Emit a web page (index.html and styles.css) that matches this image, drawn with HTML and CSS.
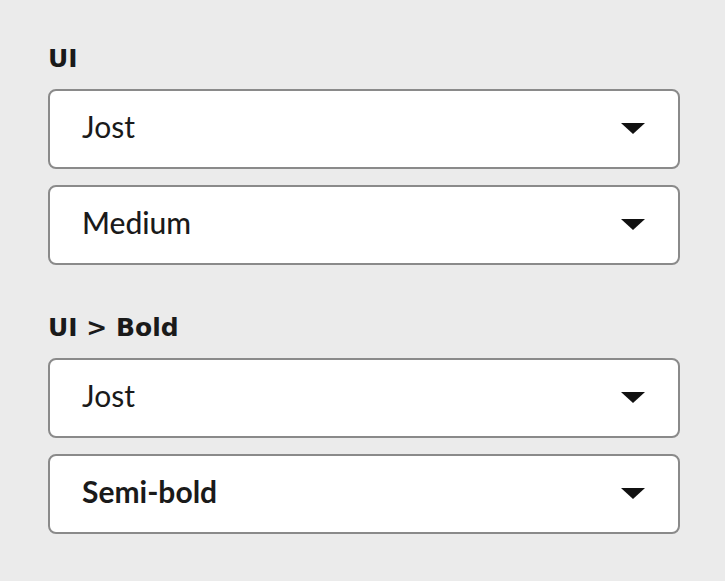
FILE: index.html
```html
<!DOCTYPE html>
<html>
<head>
<meta charset="UTF-8">
<title>Font settings</title>
<meta name="viewport" content="width=device-width, initial-scale=1.0">
<link rel="stylesheet" href="styles.css">
</head>
<body>

<div class="panel">
  <div class="group">
    <div class="label">UI</div>
    <div class="select">
      <span class="value">Jost</span>
      <svg class="caret" width="24" height="11" viewBox="0 0 24 11"><path d="M0 0H24L12 11Z"/></svg>
    </div>
    <div class="select">
      <span class="value medium">Medium</span>
      <svg class="caret" width="24" height="11" viewBox="0 0 24 11"><path d="M0 0H24L12 11Z"/></svg>
    </div>
  </div>

  <div class="group">
    <div class="label">UI &gt; Bold</div>
    <div class="select">
      <span class="value">Jost</span>
      <svg class="caret" width="24" height="11" viewBox="0 0 24 11"><path d="M0 0H24L12 11Z"/></svg>
    </div>
    <div class="select">
      <span class="value semibold">Semi-bold</span>
      <svg class="caret" width="24" height="11" viewBox="0 0 24 11"><path d="M0 0H24L12 11Z"/></svg>
    </div>
  </div>
</div>

</body>
</html>
```

FILE: styles.css
```css
body{margin:0;background:#ebebeb;font-family:Lato,"Noto Sans",sans-serif;color:#1a1a1a}
.panel{width:632px;padding:44px 0 0 48px;display:flex;flex-direction:column;gap:48px}
.group{display:flex;flex-direction:column;gap:16px}
.label{font-family:"DejaVu Sans",sans-serif;font-weight:700;font-size:25px;line-height:30px;margin-bottom:-1px;color:#1a1a1a}
.select{
 height:80px;box-sizing:border-box;background:#fff;border:2px solid #8a8a8a;border-radius:8px;
 display:flex;align-items:center;justify-content:space-between;padding:0 33px 0 32px
}
.value{font-size:30px;font-weight:400;margin-top:-7px}
.value.medium{font-weight:500}
.value.semibold{font-weight:700}
.caret{fill:#111;margin-top:-2px}
```
